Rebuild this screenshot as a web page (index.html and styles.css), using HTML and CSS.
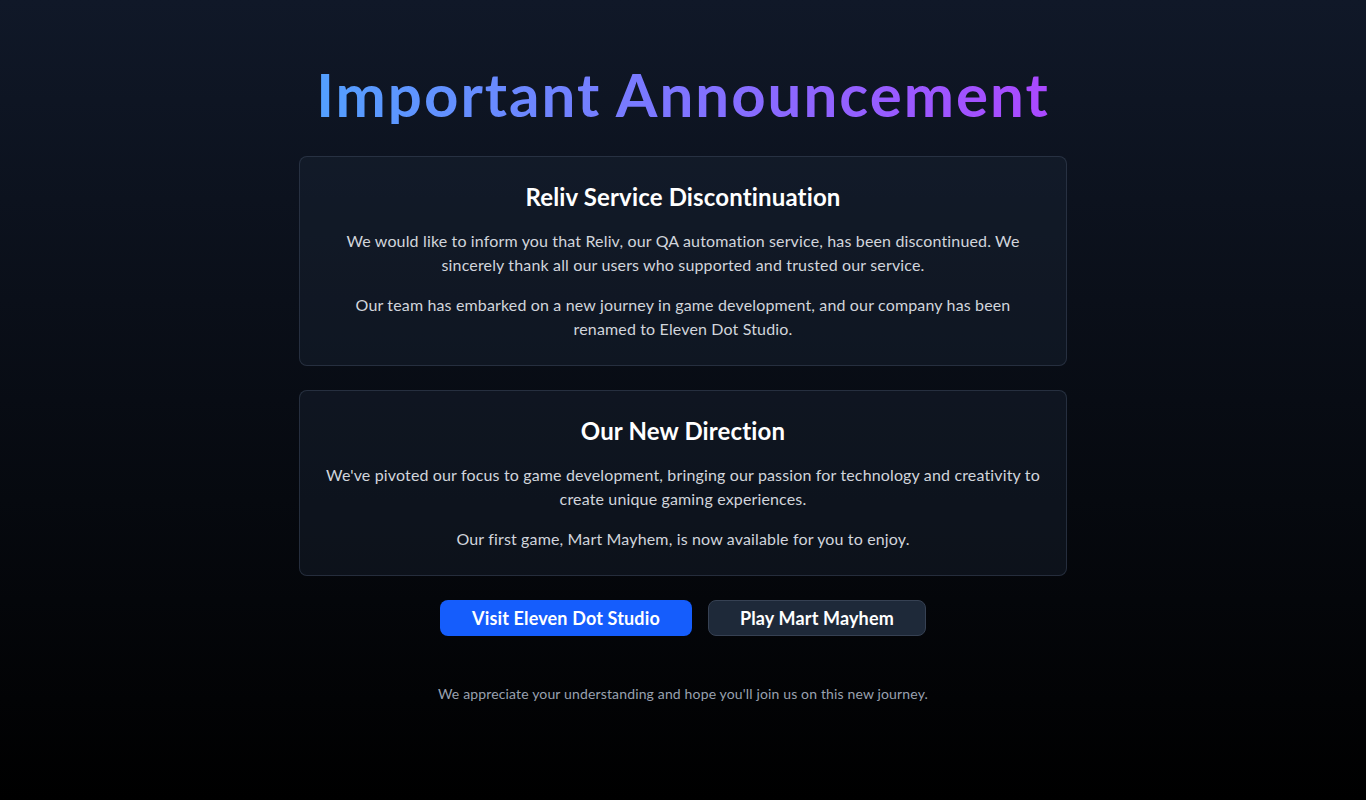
FILE: index.html
```html
<!DOCTYPE html>
<html lang="en">

<head>
  <meta charset="UTF-8">
  <meta name="viewport" content="width=device-width, initial-scale=1.0">
  <title>Important Announcement</title>
  <link rel="stylesheet" href="styles.css">
</head>

<body>
  <div class="page">
    <div class="content">
      <h1 class="headline">Important Announcement</h1>

      <div class="card">
        <h2>Reliv Service Discontinuation</h2>
        <p>We would like to inform you that Reliv, our QA automation service, has been discontinued. We sincerely thank all our users who supported and trusted our service.</p>
        <p>Our team has embarked on a new journey in game development, and our company has been renamed to Eleven Dot Studio.</p>
      </div>

      <div class="card">
        <h2>Our New Direction</h2>
        <p>We've pivoted our focus to game development, bringing our passion for technology and creativity to create unique gaming experiences.</p>
        <p>Our first game, Mart Mayhem, is now available for you to enjoy.</p>
      </div>

      <div class="actions">
        <a href="#" class="btn btn-primary">Visit Eleven Dot Studio</a>
        <a href="#" class="btn btn-dark">Play Mart Mayhem</a>
      </div>

      <p class="note">We appreciate your understanding and hope you'll join us on this new journey.</p>
    </div>
  </div>
</body>

</html>
```

FILE: styles.css
```css
body {
  margin: 0;
  padding: 0;
  min-height: 100vh;
  background: linear-gradient(to bottom, #101828, #000);
  font-family: Lato, "Open Sans", Arial, sans-serif;
  letter-spacing: 0.15px;
  color: #fff;
}

.page {
  padding: 64px 16px;
}

.content {
  max-width: 768px;
  margin: 0 auto;
  text-align: center;
}

.headline {
  margin: 0 0 32px;
  font-size: 60px;
  line-height: 1;
  font-weight: 700;
  letter-spacing: 2px;
  background: linear-gradient(to right, #51a2ff, #ad46ff);
  -webkit-background-clip: text;
  background-clip: text;
  color: transparent;
}

.card {
  margin-bottom: 24px;
  padding: 24px;
  border: 1px solid rgba(54, 65, 83, 0.6);
  border-radius: 8px;
  background-color: rgba(30, 41, 57, 0.35);
}

.card h2 {
  margin: 0 0 16px;
  font-size: 24px;
  line-height: 32px;
  font-weight: 700;
}

.card p {
  margin: 0 0 16px;
  font-size: 16px;
  line-height: 24px;
  color: #d1d5dc;
}

.card p:last-child {
  margin-bottom: 0;
}

.actions {
  display: flex;
  justify-content: center;
  gap: 16px;
}

.btn {
  display: inline-block;
  padding: 4px 32px;
  border-radius: 8px;
  font-size: 18px;
  line-height: 28px;
  font-weight: 700;
  color: #fff;
  text-decoration: none;
}

.btn-primary {
  background-color: #155dfc;
}

.btn-dark {
  padding: 3px 31px;
  background-color: #1e2939;
  border: 1px solid #364153;
}

.note {
  margin: 48px 0 0;
  font-size: 14px;
  line-height: 20px;
  color: #99a1af;
}
```
